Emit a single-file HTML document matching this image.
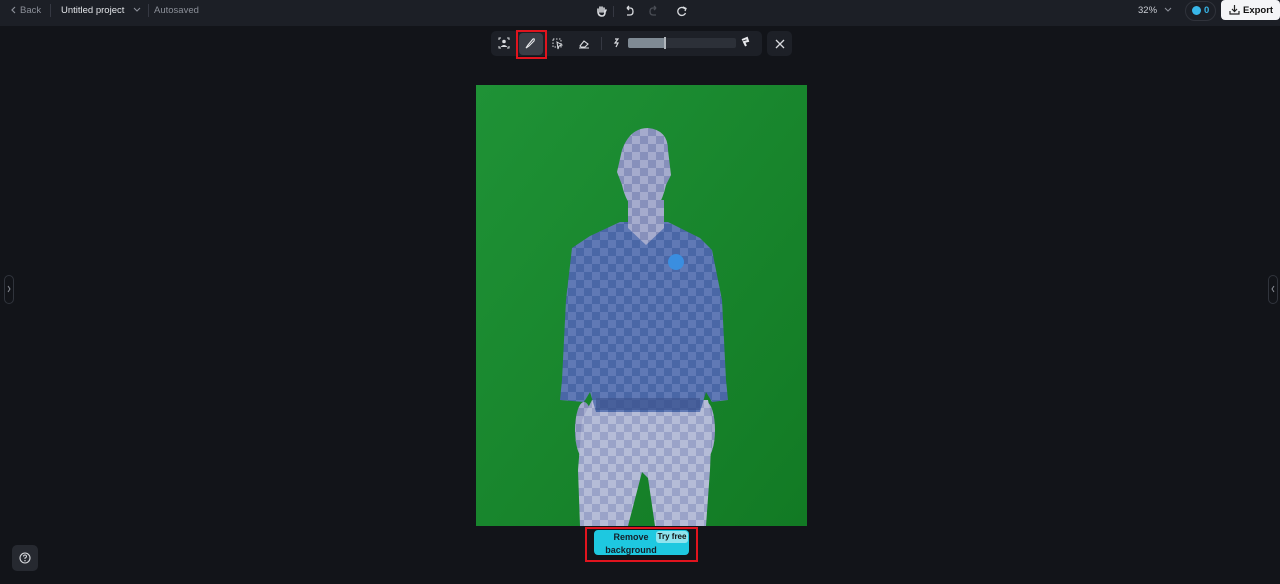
<!DOCTYPE html>
<html><head><meta charset="utf-8"><style>
*{margin:0;padding:0;box-sizing:border-box}
body{width:1280px;height:584px;background:#121419;font-family:"Liberation Sans",sans-serif;position:relative;overflow:hidden;color:#c9ccd3}
.top{position:absolute;left:0;top:0;width:1280px;height:26px;background:#1c1f26}
.t{position:absolute;font-size:9.5px;top:5px}
.sep{position:absolute;top:4px;width:1px;height:13px;background:#353842}
.tb{position:absolute;left:491px;top:31px;width:271px;height:25px;background:#1d2027;border-radius:5px}
.x{position:absolute;left:767px;top:31px;width:25px;height:25px;background:#1d2027;border-radius:5px}
svg{position:absolute}
</style></head><body>
<div class="top"></div>
<svg style="left:10px;top:5px" width="8" height="10" viewBox="0 0 8 10"><path d="M5 2 L2 5 L5 8" stroke="#8b8f98" stroke-width="1.2" fill="none"/></svg>
<div class="t" style="left:20px;color:#8b8f98">Back</div>
<div class="sep" style="left:50px"></div>
<div class="t" style="left:61px;color:#e2e4e8">Untitled project</div>
<svg style="left:132px;top:6px" width="10" height="8" viewBox="0 0 10 8"><path d="M2 2 L5 5 L8 2" stroke="#8b8f98" stroke-width="1.1" fill="none"/></svg>
<div class="sep" style="left:148px"></div>
<div class="t" style="left:154px;color:#8b8f98">Autosaved</div>
<svg style="left:595px;top:3px" width="100" height="16" viewBox="0 0 100 16">
<path d="M3 9 L3 6 M5 9 L5 4 M7 9 L7 4 M9 9 L9 5 M3 8 Q3 13 7 13 Q10 13 10 9 L11 7" stroke="#d8dade" stroke-width="1.6" fill="none" stroke-linecap="round"/>
<rect x="18" y="3" width="1" height="11" fill="#353842"/>
<path d="M32 5 L35 5 Q38 5 38 8.5 Q38 12 35 12 L32 12 M32 5 L34 3 M32 5 L34 7" stroke="#d8dade" stroke-width="1.3" fill="none"/>
<path d="M61 5 L58 5 Q55 5 55 8.5 Q55 12 58 12 L61 12 M61 5 L59 3 M61 5 L59 7" stroke="#4a4d55" stroke-width="1.3" fill="none"/>
<path d="M90 6 A4 4 0 1 0 90.5 10" stroke="#d8dade" stroke-width="1.3" fill="none"/><path d="M88 4 L91 5.5 L90 8" stroke="#d8dade" stroke-width="1.3" fill="none"/>
</svg>
<div class="t" style="left:1138px;color:#c9ccd3">32%</div>
<svg style="left:1163px;top:6px" width="10" height="8" viewBox="0 0 10 8"><path d="M2 2 L5 5 L8 2" stroke="#8b8f98" stroke-width="1.1" fill="none"/></svg>
<div style="position:absolute;left:1185px;top:1px;width:31px;height:20px;border:1px solid #30333b;border-radius:10px"></div>
<div style="position:absolute;left:1192px;top:6px;width:9px;height:9px;border-radius:50%;background:#38b6e8"></div>
<div class="t" style="left:1204px;color:#38b6e8;font-weight:bold">0</div>
<div style="position:absolute;left:1221px;top:0px;width:59px;height:20px;background:#f4f5f7;border-radius:4px"></div>
<svg style="left:1229px;top:4px" width="11" height="11" viewBox="0 0 11 11"><path d="M5.5 1 L5.5 7 M3 5 L5.5 7.5 L8 5 M1 7 L1 10 L10 10 L10 7" stroke="#222" stroke-width="1.2" fill="none"/></svg>
<div class="t" style="left:1243px;color:#111;font-weight:bold">Export</div>

<div class="tb"></div>
<div style="position:absolute;left:516px;top:30px;width:31px;height:29px;border:2px solid #e0141e"></div>
<div style="position:absolute;left:519px;top:33px;width:24px;height:22px;background:#3a3e47;border-radius:4px"></div>
<svg style="left:491px;top:31px" width="271" height="25" viewBox="0 0 271 25">
<path d="M8 9 L8 7 L10 7 M16 7 L18 7 L18 9 M8 15 L8 17 L10 17 M16 17 L18 17 L18 15" stroke="#d8dade" stroke-width="1" fill="none"/><circle cx="13" cy="10.5" r="1.8" fill="#d8dade"/><path d="M9.5 16 Q13 12 16.5 16" fill="#d8dade"/>
<path d="M35 17 L37 14 L42 8 Q44 7 43 10 L38 15 Z" stroke="#e8e9ec" stroke-width="1.1" fill="none"/>
<rect x="62" y="8" width="8" height="8" stroke="#d8dade" stroke-dasharray="1.5 1.5" fill="none"/><path d="M66 11 L71 14 L68 15 L67 18 Z" stroke="#d8dade" fill="none"/>
<path d="M89 15 L93 10 L97 13 L94 16 L90 16 Z M88 17 L98 17" stroke="#d8dade" stroke-width="1.1" fill="none"/>
<rect x="110" y="6" width="1" height="13" fill="#353842"/>
<path d="M124 8 L127 8 L124 12 L127 12 L125 16" stroke="#d8dade" stroke-width="1.2" fill="none"/>
<rect x="137" y="7" width="108" height="10" rx="2" fill="#2c3038"/>
<rect x="137" y="7" width="37" height="10" rx="2" fill="#7f8a94"/>
<rect x="173" y="6" width="2" height="12" fill="#b0b6bc"/>
<path d="M251 9 L256 7 L257 10 L253 11 L255 15" stroke="#e8e9ec" stroke-width="2" fill="none"/>
</svg>
<div class="x"></div>
<svg style="left:775px;top:39px" width="10" height="10" viewBox="0 0 10 10"><path d="M1 1 L9 9 M9 1 L1 9" stroke="#d8dade" stroke-width="1.3"/></svg>

<svg style="left:476px;top:85px" width="331" height="441" viewBox="476 85 331 441">
<defs>
<linearGradient id="g" x1="0" y1="0" x2="1" y2="1"><stop offset="0" stop-color="#1f9236"/><stop offset="1" stop-color="#127a24"/></linearGradient>
<pattern id="ps" width="16" height="16" patternUnits="userSpaceOnUse"><rect width="16" height="16" fill="#4a67a6"/><rect width="8" height="8" fill="#6079b5"/><rect x="8" y="8" width="8" height="8" fill="#6079b5"/></pattern>
<pattern id="pp" width="16" height="16" patternUnits="userSpaceOnUse"><rect width="16" height="16" fill="#9aa3c8"/><rect width="8" height="8" fill="#b5bcd7"/><rect x="8" y="8" width="8" height="8" fill="#b5bcd7"/></pattern>
<pattern id="pf" width="16" height="16" patternUnits="userSpaceOnUse"><rect width="16" height="16" fill="#8790bb"/><rect width="8" height="8" fill="#a5abcd"/><rect x="8" y="8" width="8" height="8" fill="#a5abcd"/></pattern>
</defs>
<rect x="476" y="85" width="331" height="441" fill="url(#g)"/>
<ellipse cx="584" cy="430" rx="9" ry="28" fill="url(#pf)"/>
<ellipse cx="706" cy="430" rx="9" ry="28" fill="url(#pf)"/>
<path d="M592,400 L708,400 L712,420 L710,470 L706,526 L655,526 L648,478 L642,472 L628,526 L580,526 L578,470 L582,420 Z" fill="url(#pp)"/>
<path d="M620,222 L668,222 L700,238 L712,250 L722,300 L726,380 L728,400 L712,402 L706,392 L700,412 L596,412 L590,392 L584,402 L560,400 L562,380 L566,300 L572,248 L590,236 Z" fill="url(#ps)"/>
<path d="M628,200 L664,200 L664,228 L646,245 L628,228 Z" fill="url(#pf)"/>
<path d="M622,150 Q630,128 648,128 Q668,130 668,150 L671,175 L666,185 Q660,212 646,214 Q628,212 622,185 L617,172 Z" fill="url(#pf)"/>
<rect x="596" y="398" width="104" height="12" fill="#3e5590" opacity=".7"/>
<circle cx="676" cy="262" r="8" fill="#3a8ee0"/>
</svg>

<div style="position:absolute;left:585px;top:527px;width:113px;height:35px;border:2px solid #e0141e"></div>
<div style="position:absolute;left:594px;top:530px;width:95px;height:25px;background:#1ec8e0;border-radius:4px"></div>
<div style="position:absolute;left:600px;top:531px;width:62px;font-size:9px;font-weight:bold;color:#14202a;text-align:center;line-height:12.5px">Remove background</div>
<div style="position:absolute;left:656px;top:531px;width:32px;height:12px;background:#8ee4ef;border-radius:3px;font-size:8px;font-weight:bold;color:#111;text-align:center;line-height:12px">Try free</div>

<div style="position:absolute;left:4px;top:275px;width:10px;height:29px;border:1px solid #30343c;border-radius:5px"></div>
<svg style="left:6px;top:284px" width="6" height="10" viewBox="0 0 6 10"><path d="M2 2 L4 5 L2 8" stroke="#8b8f98" fill="none"/></svg>
<div style="position:absolute;left:1268px;top:275px;width:10px;height:29px;border:1px solid #30343c;border-radius:5px"></div>
<svg style="left:1270px;top:284px" width="6" height="10" viewBox="0 0 6 10"><path d="M4 2 L2 5 L4 8" stroke="#8b8f98" fill="none"/></svg>

<div style="position:absolute;left:12px;top:545px;width:26px;height:26px;background:#262930;border-radius:5px"></div>
<svg style="left:19px;top:552px" width="12" height="12" viewBox="0 0 12 12"><circle cx="6" cy="6" r="5" stroke="#d8dade" stroke-width="1.1" fill="none"/><path d="M4.5 4.5 Q4.5 3 6 3 Q7.5 3 7.5 4.5 Q7.5 5.5 6 6 L6 7" stroke="#d8dade" fill="none"/><circle cx="6" cy="8.7" r=".7" fill="#d8dade"/></svg>
</body></html>
